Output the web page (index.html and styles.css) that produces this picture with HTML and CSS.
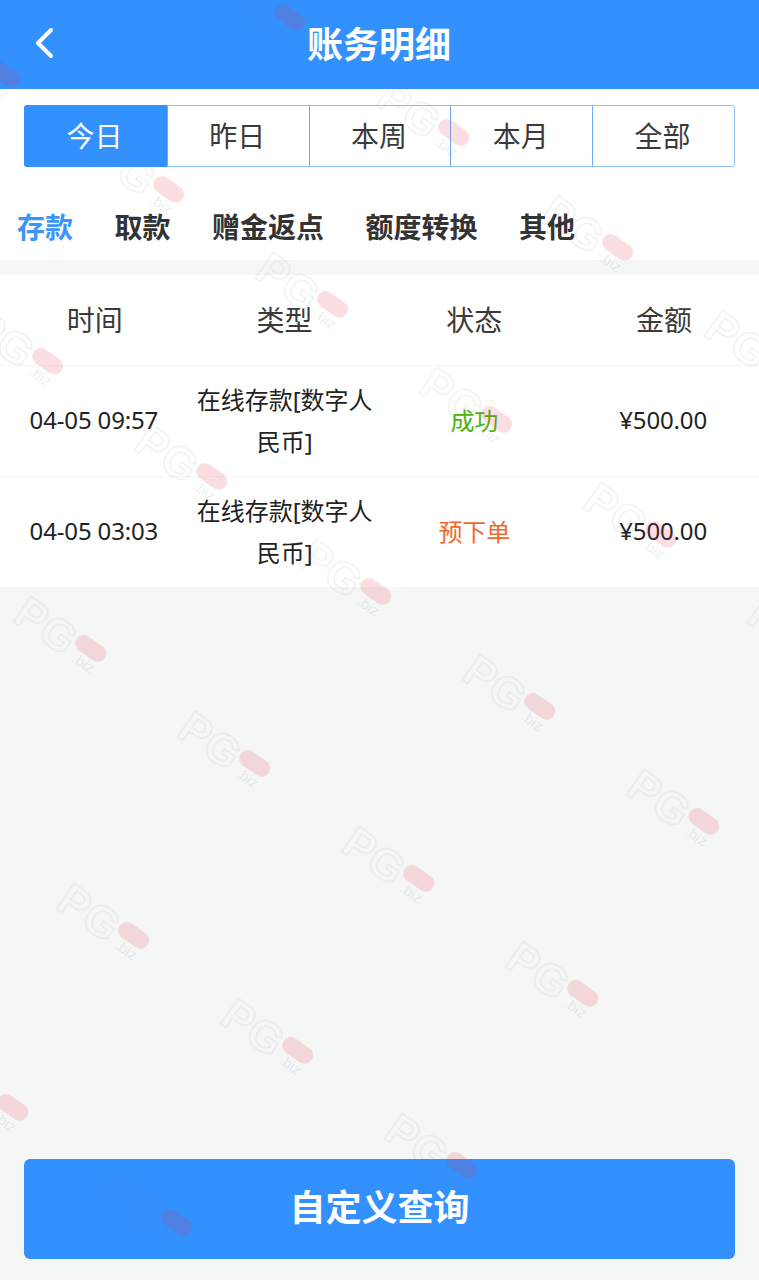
FILE: index.html
```html
<!DOCTYPE html>
<html lang="zh-CN">

<head>
    <meta charset="UTF-8" />
    <meta name="viewport" content="width=device-width, initial-scale=1.0" />
    <title>账务明细</title>
    <link rel="stylesheet" href="styles.css">
</head>

<body>
    <div class="page">
        <header class="top-bar">
            <a class="back-link">
                <svg width="22" height="32" viewBox="0 0 22 32" fill="none">
                    <path d="M18 3 L5 16 L18 29" stroke="#fff" stroke-width="4" stroke-linecap="round" stroke-linejoin="round" />
                </svg>
            </a>
            <h1 class="top-title">账务明细</h1>
        </header>

        <section class="filters">
            <div class="date-tabs">
                <div class="date-tab active">今日</div>
                <div class="date-tab">昨日</div>
                <div class="date-tab">本周</div>
                <div class="date-tab">本月</div>
                <div class="date-tab">全部</div>
            </div>
            <div class="type-tabs">
                <span class="type-tab active">存款</span>
                <span class="type-tab">取款</span>
                <span class="type-tab">赠金返点</span>
                <span class="type-tab">额度转换</span>
                <span class="type-tab">其他</span>
            </div>
        </section>

        <section class="records">
            <div class="record-row record-head">
                <div class="cell">时间</div>
                <div class="cell">类型</div>
                <div class="cell">状态</div>
                <div class="cell">金额</div>
            </div>
            <div class="record-row">
                <div class="cell cell-num">04-05 09:57</div>
                <div class="cell">在线存款[数字人民币]</div>
                <div class="cell status-ok">成功</div>
                <div class="cell cell-num">¥500.00</div>
            </div>
            <div class="record-row">
                <div class="cell cell-num">04-05 03:03</div>
                <div class="cell">在线存款[数字人民币]</div>
                <div class="cell status-pending">预下单</div>
                <div class="cell cell-num">¥500.00</div>
            </div>
        </section>

        <div class="query-wrap">
            <button type="button" class="query-button">自定义查询</button>
        </div>

        <div class="marks" id="marks"></div>
    </div>

    <script>
        // watermark lattice, anchored on the centre of each red pill
        const marks = document.getElementById("marks");
        for (let i = 0; i < 10; i++) {
            for (let j = 0; j < 6; j++) {
                const x = 290 + i * 164 - j * 285;
                const y = 17 + i * 115 + j * 57;
                // the sheet stops short of the lower right corner
                if (x < -10 || x > 830 || y > 1230 || (x > 740 && y > 700)) continue;
                const mark = document.createElement("div");
                mark.className = "mark";
                mark.style.left = x + "px";
                mark.style.top = y + "px";
                mark.innerHTML = '<span class="mark-name">PG</span><span class="mark-pill"></span><span class="mark-biz">.biz</span>';
                marks.appendChild(mark);
            }
        }
    </script>
</body>

</html>
```

FILE: styles.css
```css
* {
    box-sizing: border-box;
}

body {
    margin: 0;
    background-color: #f5f6f6;
    color: #333;
    font-family: "Noto Sans", "Noto Sans CJK SC", sans-serif;
}

.page {
    position: relative;
    display: flex;
    flex-direction: column;
    height: 1280px;
    overflow: hidden;
}

.top-bar {
    position: relative;
    display: flex;
    align-items: center;
    justify-content: center;
    height: 89px;
    background-color: #3390ff;
    color: white;
}

.back-link {
    position: absolute;
    left: 33px;
    top: 27px;
    line-height: 0;
}

.top-title {
    margin: 0 1px 0 0;
    font-size: 36px;
    font-weight: 700;
    line-height: 89px;
}

.filters {
    background-color: white;
    padding: 16px 24px 0;
    height: 171px;
}

.date-tabs {
    display: grid;
    grid-template-columns: repeat(5, 1fr);
    height: 62px;
    border: 1px solid #8fc1fb;
    border-radius: 3px;
}

.date-tab {
    display: flex;
    align-items: center;
    justify-content: center;
    padding: 0 2px 3px 0;
    border-left: 1px solid #6aacfb;
    font-size: 28px;
    color: #3a3a3a;
}

.date-tab:first-child {
    border-left: none;
}

.date-tab.active {
    margin: -1px 0 -1px -1px;
    background-color: #3390ff;
    border-radius: 3px 0 0 3px;
    color: white;
}

.type-tabs {
    display: flex;
    gap: 41.5px;
    margin: 39px 0 0 -7px;
}

.type-tab {
    font-size: 28px;
    font-weight: 700;
    line-height: 42px;
    color: #333;
}

.type-tab.active {
    color: #3d96f5;
}

.records {
    margin-top: 15px;
    background-color: white;
}

.record-row {
    display: grid;
    grid-template-columns: repeat(4, 1fr);
    align-items: center;
    height: 111px;
    border-bottom: 1px solid #f5f5f5;
    font-size: 24px;
    line-height: 42px;
    color: #222;
    text-align: center;
}

.record-row:last-child {
    border-bottom: none;
    height: 110px;
}

.record-head {
    height: 91px;
    font-size: 28px;
    color: #3a3a3a;
}

.cell {
    padding: 0 6px;
}

.cell-num {
    padding: 0 7px 2px 5px;
    letter-spacing: -0.15px;
}

.status-ok {
    color: #4db30a;
}

.status-pending {
    color: #f2672e;
}

.query-wrap {
    margin-top: auto;
    padding: 0 24px 21px;
}

.query-button {
    display: block;
    width: 100%;
    height: 100px;
    padding: 0 0 8px;
    border: none;
    border-radius: 6px;
    background-color: #3390ff;
    color: white;
    font-family: inherit;
    font-size: 36px;
    font-weight: 700;
}

.marks {
    position: absolute;
    inset: 0;
    pointer-events: none;
}

.mark {
    position: absolute;
    width: 0;
    height: 0;
    transform: rotate(35deg);
}

.mark-name {
    position: absolute;
    right: 16px;
    top: -14px;
    font-family: "Liberation Sans", sans-serif;
    font-size: 44px;
    font-weight: 700;
    line-height: 44px;
    letter-spacing: 1px;
    color: transparent;
    -webkit-text-stroke: 1.5px rgba(110, 135, 135, 0.11);
    filter: blur(0.5px);
}

.mark-pill {
    position: absolute;
    left: -17px;
    top: -8px;
    width: 34px;
    height: 17px;
    border-radius: 9px;
    background-color: rgba(230, 50, 75, 0.16);
    filter: blur(0.6px);
}

.mark-biz {
    position: absolute;
    right: -14px;
    top: 9px;
    font-family: "Liberation Sans", sans-serif;
    font-size: 15px;
    line-height: 16px;
    color: rgba(110, 135, 135, 0.14);
}
```
